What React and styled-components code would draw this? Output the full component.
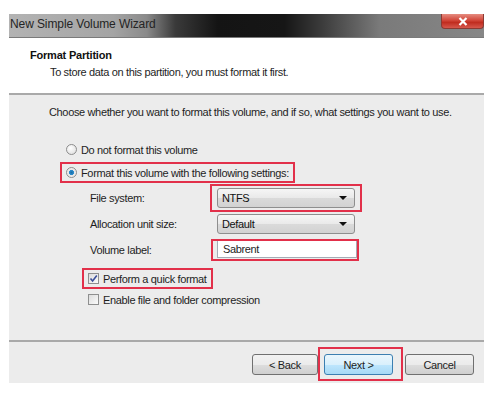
import React from "react";
import styled, { createGlobalStyle } from "styled-components";

const GlobalStyles = createGlobalStyle`
	html, body {
		margin: 0;
		padding: 0;
		background: #ffffff;
	}
	body {
		font-family: "Liberation Sans", Arial, sans-serif;
		font-size: 11px;
		letter-spacing: -0.35px;
		color: #1e1e1e;
	}
`;

const Page = styled.div`
	width: 499px;
	height: 404px;
	padding: 14px 0 0 9px;
	box-sizing: border-box;
	overflow: hidden;
`;

const Window = styled.div`
	width: 475px;
	display: flex;
	flex-direction: column;
`;

// Title bar
const TitleBar = styled.div`
	height: 23px;
	display: flex;
	justify-content: space-between;
	align-items: flex-start;
	background: linear-gradient(
		to right,
		#b3b3b3 0%,
		#a4a4a4 22%,
		#8a8a8a 29%,
		#3a3a3a 35%,
		#141414 44%,
		#161616 58%,
		#3c3c3c 66%,
		#7a7a7a 78%,
		#878787 100%
	);
	border-bottom: 1px solid #7a7a7a;
`;

const Title = styled.span`
	font-size: 12px;
	line-height: 21px;
	padding-left: 1px;
	color: #242424;
	letter-spacing: -0.1px;
`;

const CloseButton = styled.div`
	width: 43px;
	height: 15px;
	display: flex;
	align-items: center;
	justify-content: center;
	background: linear-gradient(to bottom, #e58c80 0%, #d2473a 45%, #c02d20 60%, #d6574b 100%);
	border: 1px solid #8b3a33;
	border-top: none;
	border-radius: 0 0 4px 4px;
	box-sizing: border-box;
`;

// Header
const Header = styled.div`
	height: 57px;
	background: #ffffff;
	border-bottom: 2px solid #a9a9a9;
	padding: 10px 0 0 21px;
	box-sizing: border-box;
`;

const HeaderTitle = styled.div`
	font-weight: bold;
	line-height: 14px;
	letter-spacing: -0.2px;
	color: #111;
`;

const HeaderText = styled.div`
	margin: 3px 0 0 20px;
	line-height: 14px;
`;

// Body
const Body = styled.div`
	height: 245px;
	background: #ececec;
	padding: 10px 0 0 40px;
	box-sizing: border-box;
	display: flex;
	flex-direction: column;
	align-items: flex-start;
`;

const Intro = styled.div`
	line-height: 14px;
`;

const OptionRow = styled.div`
	display: inline-flex;
	align-items: center;
	gap: 4px;
	height: 21px;
	margin: ${({ $mt }) => $mt}px 0 0 ${({ $ml }) => $ml}px;
	padding: 0 4px 0 4px;
	box-sizing: border-box;
	border: 2px solid ${({ $marked }) => ($marked ? "#e2304a" : "transparent")};
`;

const Radio = styled.span`
	width: 11px;
	height: 11px;
	border-radius: 50%;
	box-sizing: border-box;
	border: 1px solid #8d8d8d;
	background: ${({ $checked }) =>
		$checked
			? "radial-gradient(circle, #1b6fa8 0%, #2c8ccc 35%, #e8e8e8 45%, #f4f4f4 100%)"
			: "radial-gradient(circle at 40% 35%, #ffffff 0%, #d9d9d9 100%)"};
`;

const Check = styled.span`
	width: 11px;
	height: 11px;
	box-sizing: border-box;
	border: 1px solid #8e8f8f;
	background: linear-gradient(to bottom right, #dcdcdc, #fbfbfb);
	display: flex;
	align-items: center;
	justify-content: center;
`;

const Settings = styled.div`
	display: grid;
	grid-template-columns: 127px 138px;
	grid-auto-rows: 20px;
	row-gap: 6px;
	align-items: center;
	margin: 5px 0 0 41px;
`;

const FieldLabel = styled.span``;

const Marked = styled.div`
	position: relative;
	height: 100%;
	&::after {
		content: "";
		position: absolute;
		top: ${({ $t }) => -$t}px;
		bottom: ${({ $b }) => -$b}px;
		left: ${({ $l }) => -$l}px;
		right: ${({ $r }) => -$r}px;
		border: 2px solid #e2304a;
		pointer-events: none;
	}
`;

const Select = styled.div`
	height: 20px;
	box-sizing: border-box;
	border: 1px solid #8e8e8e;
	border-radius: 3px;
	background: linear-gradient(to bottom, #f6f6f6 0%, #e9e9e9 50%, #dadada 51%, #d2d2d2 100%);
	display: flex;
	align-items: center;
	justify-content: space-between;
	padding: 0 7px 0 4px;
	color: #111;
`;

const Arrow = styled.span`
	width: 0;
	height: 0;
	border-left: 4px solid transparent;
	border-right: 4px solid transparent;
	border-top: 4px solid #111;
`;

const TextInput = styled.div`
	height: 18px;
	width: 140px;
	box-sizing: border-box;
	border: 1px solid #a5acb5;
	background: #ffffff;
	display: flex;
	align-items: center;
	padding-left: 5px;
`;

// Footer
const Footer = styled.div`
	height: 43px;
	background: #ececec;
	border-top: 2px solid #a9a9a9;
	box-sizing: border-box;
	display: flex;
	justify-content: flex-end;
	align-items: flex-start;
	padding: 12px 10px 0 0;
`;

const Button = styled.div`
	position: relative;
	width: ${({ $w }) => $w}px;
	height: 21px;
	margin-left: ${({ $gap }) => $gap}px;
	box-sizing: border-box;
	border: 1px solid ${({ $primary }) => ($primary ? "#3c7fb1" : "#707070")};
	border-radius: 3px;
	background: ${({ $primary }) =>
		$primary
			? "linear-gradient(to bottom, #eaf6fd 0%, #d9f0fc 50%, #bee6fd 51%, #a7d9f5 100%)"
			: "linear-gradient(to bottom, #f2f2f2 0%, #ebebeb 50%, #dddddd 51%, #cfcfcf 100%)"};
	display: flex;
	align-items: center;
	justify-content: center;
`;

const NextMark = styled.div`
	position: absolute;
	top: -8px;
	bottom: -7px;
	left: -7px;
	right: -11px;
	border: 2px solid #e2304a;
	pointer-events: none;
`;

const CheckMark = () => (
	<svg width="9" height="9" viewBox="0 0 9 9">
		<path d="M1.5 4.5 L3.6 7 L7.8 1.5" fill="none" stroke="#3b4f9a" strokeWidth="1.6" />
	</svg>
);

export default function App() {
	return (
		<>
			<GlobalStyles />
			<Page>
				<Window>
					<TitleBar>
						<Title>New Simple Volume Wizard</Title>
						<CloseButton>
							<svg width="10" height="9" viewBox="0 0 10 9">
								<path d="M1.5 1 L8.5 8 M8.5 1 L1.5 8" stroke="#ffffff" strokeWidth="2.2" />
							</svg>
						</CloseButton>
					</TitleBar>
					<Header>
						<HeaderTitle>Format Partition</HeaderTitle>
						<HeaderText>To store data on this partition, you must format it first.</HeaderText>
					</Header>
					<Body>
						<Intro>
							Choose whether you want to format this volume, and if so, what settings you want to use.
						</Intro>
						<OptionRow $mt={20} $ml={11}>
							<Radio />
							Do not format this volume
						</OptionRow>
						<OptionRow $mt={2} $ml={11} $marked>
							<Radio $checked />
							Format this volume with the following settings:
						</OptionRow>
						<Settings>
							<FieldLabel>File system:</FieldLabel>
							<Marked $t={4} $b={4} $l={7} $r={7}>
								<Select>
									NTFS
									<Arrow />
								</Select>
							</Marked>
							<FieldLabel>Allocation unit size:</FieldLabel>
							<Select>
								Default
								<Arrow />
							</Select>
							<FieldLabel>Volume label:</FieldLabel>
							<Marked $t={1} $b={1} $l={6} $r={4}>
								<TextInput>Sabrent</TextInput>
							</Marked>
						</Settings>
						<OptionRow $mt={8} $ml={33} $marked>
							<Check>
								<CheckMark />
							</Check>
							Perform a quick format
						</OptionRow>
						<OptionRow $mt={0} $ml={33}>
							<Check />
							Enable file and folder compression
						</OptionRow>
					</Body>
					<Footer>
						<Button $w={66} $gap={0}>&lt; Back</Button>
						<Button $w={69} $gap={6} $primary>
							Next &gt;
							<NextMark />
						</Button>
						<Button $w={69} $gap={12}>Cancel</Button>
					</Footer>
				</Window>
			</Page>
		</>
	);
}
